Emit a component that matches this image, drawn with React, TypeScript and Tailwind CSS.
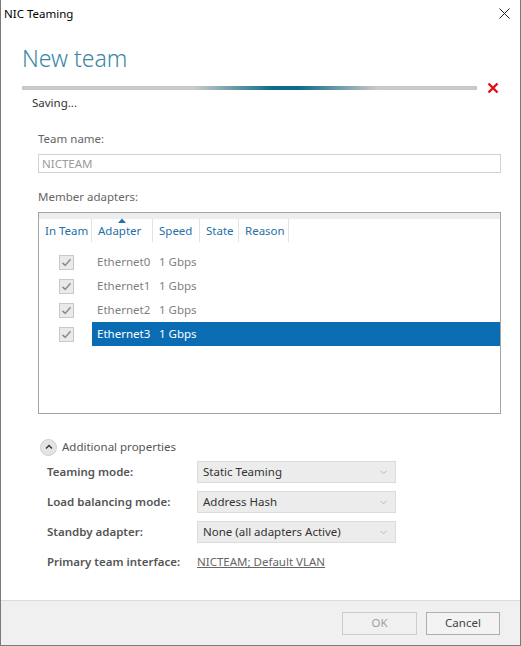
import React from "react";

const font = { fontFamily: '"Noto Sans", "Open Sans", sans-serif' };

function Check() {
  return (
    <div className="w-[15px] h-[15px] border border-[#c8c8c8] bg-[#eaeaea] flex items-center justify-center">
      <svg width="11" height="11" viewBox="0 0 11 11">
        <path d="M1.5 5.8 L4.2 8.4 L9.5 2.2" fill="none" stroke="#8e8e8e" strokeWidth="1.6" />
      </svg>
    </div>
  );
}

function Combo({ text }: { text: string }) {
  return (
    <div className="w-[199px] h-[22px] bg-[#ececec] border border-[#dcdcdc] flex items-center justify-between pl-[5px] pr-[8px]">
      <span className="text-[11.5px] text-[#333]">{text}</span>
      <svg width="7" height="5" viewBox="0 0 7 5">
        <path d="M0.5 0.8 L3.5 3.8 L6.5 0.8" fill="none" stroke="#b8b8b8" strokeWidth="1" />
      </svg>
    </div>
  );
}

export default function App() {
  const rows = ["Ethernet0", "Ethernet1", "Ethernet2", "Ethernet3"];
  const cols = [
    { label: "In Team", w: 53 },
    { label: "Adapter", w: 61 },
    { label: "Speed", w: 47 },
    { label: "State", w: 39 },
    { label: "Reason", w: 50 },
  ];
  return (
    <div
      className="relative w-[521px] h-[646px] bg-white border-x border-b border-[#7a7a7a] flex flex-col overflow-hidden"
      style={font}
    >
      {/* title bar */}
      <div className="h-[27px] flex items-center justify-between pl-[3px] pr-[10px]">
        <span className="text-[11.5px] text-black">NIC Teaming</span>
        <svg width="11" height="11" viewBox="0 0 11 11">
          <path d="M0.5 0.5 L10.5 10.5 M10.5 0.5 L0.5 10.5" stroke="#222" strokeWidth="1" />
        </svg>
      </div>

      <div className="flex-1 flex flex-col pl-[21px]">
        <div className="mt-[13px] h-[36px] leading-[36px] text-[23px] font-light text-[#3a87a3]">New team</div>

        <div className="mt-[7px] h-[10px] flex items-center">
          <div className="w-[455px] h-[4px] bg-[linear-gradient(to_right,#c9c9c9_0%,#c9c9c9_38%,#0e6c88_55%,#0e6c88_61%,#c9c9c9_78%,#c9c9c9_100%)]" />
          <svg className="ml-[10px]" width="12" height="12" viewBox="0 0 12 12">
            <path d="M1.5 1.5 L10.5 10.5 M10.5 1.5 L1.5 10.5" stroke="#e01010" strokeWidth="2.4" />
          </svg>
        </div>

        <div className="mt-[2px] pl-[10px] text-[11.5px] leading-[16px] text-[#333]">Saving...</div>

        <div className="pl-[16px] pr-[19px] flex flex-col">
          <div className="mt-[20px] text-[11.5px] leading-[16px] text-[#666]">Team name:</div>
          <div className="mt-[7px] h-[19px] border border-[#d2d2d2] flex items-center pl-[3px] text-[11.5px] text-[#9a9a9a]">
            NICTEAM
          </div>
          <div className="mt-[16px] text-[11.5px] leading-[16px] text-[#666]">Member adapters:</div>

          <div className="mt-[7px] h-[202px] border border-[#a4a4a4] flex flex-col">
            <div className="h-[6px] bg-[#ededed]" />
            <div className="h-[23px] flex">
              {cols.map((c, i) => (
                <div
                  key={c.label}
                  className="relative border-r border-[#e3e3e3] flex items-center pl-[6px] text-[11.5px] text-[#2570a8]"
                  style={{ width: c.w }}
                >
                  {i === 1 && (
                    <svg className="absolute left-[26px] top-[-1px]" width="8" height="5" viewBox="0 0 8 5">
                      <path d="M0 5 L4 0.5 L8 5 Z" fill="#2570a8" />
                    </svg>
                  )}
                  {c.label}
                </div>
              ))}
            </div>
            <div className="mt-[8px] flex flex-col">
              {rows.map((r, i) => {
                const sel = i === 3;
                return (
                  <div key={r} className="h-[24px] flex items-center">
                    <div className="w-[53px] flex justify-center pl-[2px]">
                      <Check />
                    </div>
                    <div
                      className={
                        "flex-1 h-full flex items-center text-[11.5px] " +
                        (sel ? "bg-[#0a6db4] text-white" : "text-[#808080]")
                      }
                    >
                      <span className="w-[67px] pl-[5px]">{r}</span>
                      <span>1 Gbps</span>
                    </div>
                  </div>
                );
              })}
            </div>
          </div>

          <div className="mt-[25px] h-[16px] flex items-center pl-[2px]">
            <div className="w-[17px] h-[17px] rounded-full bg-[#e4e4e4] border border-[#cfcfcf] flex items-center justify-center">
              <svg width="8" height="6" viewBox="0 0 8 6">
                <path d="M1 4.5 L4 1.5 L7 4.5" fill="none" stroke="#333" strokeWidth="1.4" />
              </svg>
            </div>
            <span className="ml-[5px] text-[11.5px] text-[#555]">Additional properties</span>
          </div>

          <div className="mt-[6px] pl-[9px] flex flex-col gap-[8px]">
            {[
              ["Teaming mode:", "Static Teaming"],
              ["Load balancing mode:", "Address Hash"],
              ["Standby adapter:", "None (all adapters Active)"],
            ].map(([l, v]) => (
              <div key={l} className="h-[22px] flex items-center">
                <span className="w-[150px] text-[11.5px] font-semibold text-[#555]">{l}</span>
                <Combo text={v} />
              </div>
            ))}
            <div className="h-[22px] flex items-center">
              <span className="w-[150px] text-[11.5px] font-semibold text-[#555]">Primary team interface:</span>
              <span className="text-[11.5px] text-[#666] underline">NICTEAM; Default VLAN</span>
            </div>
          </div>
        </div>
      </div>

      {/* footer */}
      <div className="h-[45px] bg-[#f0f0f0] border-t border-[#dcdcdc] flex items-center justify-end gap-[9px] pr-[20px]">
        <div className="w-[75px] h-[23px] border border-[#cccccc] flex items-center justify-center text-[11.5px] text-[#a0a0a0]">
          OK
        </div>
        <div className="w-[74px] h-[23px] border border-[#adadad] bg-[#f3f3f3] flex items-center justify-center text-[11.5px] text-[#444]">
          Cancel
        </div>
      </div>
    </div>
  );
}
